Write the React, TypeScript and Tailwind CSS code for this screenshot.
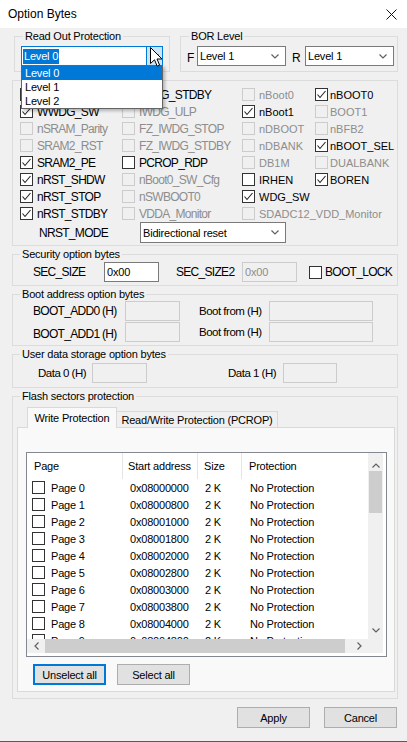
import React from "react";

type Opt = { label: string; checked?: boolean; disabled?: boolean } | null;

const BIG = "text-[12px] tracking-[-0.7px]";
const GRAY = "text-[#8d8d8d]";

const Check = ({ checked, disabled }: { checked?: boolean; disabled?: boolean }) => (
  <span
    className={`relative block w-[13px] h-[13px] shrink-0 border ${
      disabled ? "border-[#cccccc] bg-[#f0f0f0]" : "border-[#333333] bg-white"
    }`}
  >
    {checked && (
      <svg viewBox="0 0 11 11" className="absolute left-0 top-0 w-[11px] h-[11px]">
        <path d="M1.5 5.5L4 8.5L9.5 2" fill="none" stroke="#222" strokeWidth="1.1" />
      </svg>
    )}
  </span>
);

const Chevron = ({ dir = "down" }: { dir?: "down" | "up" | "left" | "right" }) => {
  const d = {
    down: "M0.5 0.5L4 4L7.5 0.5",
    up: "M0.5 4.5L4 1L7.5 4.5",
    left: "M4.5 0.5L1 4L4.5 7.5",
    right: "M0.5 0.5L4 4L0.5 7.5",
  }[dir];
  const horiz = dir === "down" || dir === "up";
  return (
    <svg
      width={horiz ? 8 : 5}
      height={horiz ? 5 : 8}
      viewBox={horiz ? "0 0 8 5" : "0 0 5 8"}
      className="block"
    >
      <path d={d} fill="none" stroke="#606060" strokeWidth="1.2" />
    </svg>
  );
};

const Combo = ({ w, h = "h-[20px]", text }: { w: string; h?: string; text: string }) => (
  <div
    className={`${w} ${h} flex items-center justify-between border border-[#7a7a7a] bg-white pl-[2px] pr-[6px]`}
  >
    <span>{text}</span>
    <Chevron />
  </div>
);

const Field = ({ w, text, disabled }: { w: string; text?: string; disabled?: boolean }) => (
  <div
    className={`${w} h-[20px] flex items-center pl-[2px] border ${
      disabled ? "border-[#cccccc] bg-[#f0f0f0] text-[#8d8d8d]" : "border-[#7a7a7a] bg-white"
    }`}
  >
    {text}
  </div>
);

const Group = ({
  title,
  className,
  legendClass = "ml-[7px]",
  children,
}: {
  title: string;
  className?: string;
  legendClass?: string;
  children: React.ReactNode;
}) => (
  <fieldset className={`border border-[#dcdcdc] ${className ?? ""}`}>
    <legend className={`${legendClass} px-[2px] h-[14px] leading-[14px]`}>{title}</legend>
    {children}
  </fieldset>
);

const col1: Opt[] = [
  { label: "IWDG_SW", checked: true },
  { label: "WWDG_SW", checked: true },
  { label: "nSRAM_Parity", disabled: true },
  { label: "SRAM2_RST", disabled: true },
  { label: "SRAM2_PE", checked: true },
  { label: "nRST_SHDW", checked: true },
  { label: "nRST_STOP", checked: true },
  { label: "nRST_STDBY", checked: true },
];
const col2: Opt[] = [
  { label: "IWDG_STDBY" },
  { label: "IWDG_ULP", disabled: true },
  { label: "FZ_IWDG_STOP", disabled: true },
  { label: "FZ_IWDG_STDBY", disabled: true },
  { label: "PCROP_RDP" },
  { label: "nBoot0_SW_Cfg", disabled: true },
  { label: "nSWBOOT0", disabled: true },
  { label: "VDDA_Monitor", disabled: true },
];
const col3: Opt[] = [
  { label: "nBoot0", disabled: true },
  { label: "nBoot1", checked: true },
  { label: "nDBOOT", disabled: true },
  { label: "nDBANK", disabled: true },
  { label: "DB1M", disabled: true },
  { label: "IRHEN" },
  { label: "WDG_SW", checked: true },
  { label: "SDADC12_VDD_Monitor", disabled: true },
];
const col4: Opt[] = [
  { label: "nBOOT0", checked: true },
  { label: "BOOT1", disabled: true },
  { label: "nBFB2", disabled: true },
  { label: "nBOOT_SEL", checked: true },
  { label: "DUALBANK", disabled: true },
  { label: "BOREN", checked: true },
  null,
  null,
];

const OptionCell = ({ opt, big, gap }: { opt: Opt; big?: boolean; gap: string }) => {
  if (!opt) return <div className="h-[17px]" />;
  return (
    <div className={`h-[17px] flex items-center ${gap}`}>
      <Check checked={opt.checked} disabled={opt.disabled} />
      <span
        className={`whitespace-nowrap ${big ? BIG : "text-[11px] tracking-[0px]"} ${
          opt.disabled ? GRAY : ""
        }`}
      >
        {opt.label}
      </span>
    </div>
  );
};

const pages = Array.from({ length: 10 }).map((_, i) => ({
  name: `Page ${i}`,
  address: "0x" + (0x08000000 + i * 0x800).toString(16).toUpperCase().padStart(8, "0"),
}));

const Button = ({ label, focused }: { label: string; focused?: boolean }) => (
  <div
    className={`w-[73px] h-[21px] flex items-center justify-center bg-[#e1e1e1] ${
      focused ? "border-2 border-[#0078d7]" : "border border-[#adadad]"
    }`}
  >
    {label}
  </div>
);

export default function App() {
  return (
    <div className="relative w-[407px] h-[742px] bg-[#f0f0f0] flex flex-col overflow-hidden font-['Liberation_Sans',Arial,sans-serif] text-[11px] leading-[14px] tracking-[-0.2px] text-black select-none">
      {/* title bar */}
      <div className="h-[28px] shrink-0 bg-white flex items-center justify-between pl-[8px] pr-[10px]">
        <span className="text-[12px] tracking-normal">Option Bytes</span>
        <svg width="11" height="11" viewBox="0 0 11 11" className="block">
          <path d="M0.5 0.5L10.5 10.5M10.5 0.5L0.5 10.5" stroke="#111" strokeWidth="1" />
        </svg>
      </div>

      {/* read out protection + BOR */}
      <div className="flex mt-[1px]">
        <Group title="Read Out Protection" legendClass="ml-[8px]" className="ml-[14px] w-[156px] pb-[5px]">
          <div className="ml-[6px] mt-[3px] w-[142px] h-[20px] flex border border-[#0078d7] bg-white">
            <div className="flex-1 flex items-center pl-[1px]">
              <span className="bg-[#0078d7] text-white px-[1px] leading-[15px]">Level 0</span>
            </div>
            <div className="w-[16px] bg-[#cce4f7] border-l border-[#0078d7] flex items-center justify-center">
              <Chevron />
            </div>
          </div>
        </Group>
        <Group title="BOR Level" legendClass="ml-[8px]" className="ml-[10px] w-[218px] pb-[5px]">
          <div className="mt-[3px] flex items-center pl-[6px]">
            <span className="w-[10px] pt-[4px] text-[12px]">F</span>
            <Combo w="w-[89px]" text="Level 1" />
            <span className="ml-[6px] w-[13px] pt-[4px] text-[12px]">R</span>
            <Combo w="w-[89px]" text="Level 1" />
          </div>
        </Group>
      </div>

      {/* user option bits */}
      <div className="ml-[12px] mt-[8px] w-[386px] border border-[#dcdcdc] pt-[5px] pb-[2px]">
        <div className="grid grid-cols-[102px_120px_73px_1fr] pl-[7px]">
          {col1.map((_, r) => (
            <React.Fragment key={r}>
              <OptionCell opt={col1[r]} big gap="gap-[4px]" />
              <OptionCell opt={col2[r]} big gap="gap-[4px]" />
              <OptionCell opt={col3[r]} gap="gap-[4px]" />
              <OptionCell opt={col4[r]} gap="gap-[2px]" />
            </React.Fragment>
          ))}
        </div>
        <div className="flex items-center h-[21px] pl-[26px]">
          <span className={`w-[101px] ${BIG}`}>NRST_MODE</span>
          <Combo w="w-[146px]" h="h-[21px]" text="Bidirectional reset" />
        </div>
      </div>

      {/* security */}
      <Group title="Security option bytes" className="ml-[12px] mt-[1px] w-[386px] pb-[3px]">
        <div className="mt-[1px] flex items-center pl-[20px]">
          <span className={`w-[71px] ${BIG}`}>SEC_SIZE</span>
          <Field w="w-[55px]" text="0x00" />
          <span className={`ml-[17px] w-[66px] ${BIG}`}>SEC_SIZE2</span>
          <Field w="w-[55px]" text="0x00" disabled />
          <div className="ml-[12px] flex items-center gap-[3px]">
            <Check />
            <span className={BIG}>BOOT_LOCK</span>
          </div>
        </div>
      </Group>

      {/* boot address */}
      <Group title="Boot address option bytes" className="ml-[12px] mt-[1px] w-[386px] pb-[3px]">
        <div className="flex flex-col gap-[1px] pl-[20px]">
          {["BOOT_ADD0 (H)", "BOOT_ADD1 (H)"].map((label, i) => (
            <div key={label} className="flex items-center">
              <span className={`w-[92px] ${BIG} ${i === 1 ? "pt-[4px]" : ""}`}>{label}</span>
              <Field w="w-[55px]" disabled />
              <span className="ml-[19px] w-[70px] text-[11.5px] tracking-[-0.5px]">Boot from (H)</span>
              <Field w="w-[104px]" disabled />
            </div>
          ))}
        </div>
      </Group>

      {/* user data */}
      <Group title="User data storage option bytes" className="ml-[12px] mt-[1px] w-[386px] pb-[4px]">
        <div className="mt-[2px] flex items-center pl-[25px]">
          <span className="w-[54px] text-[11.5px] tracking-[-0.5px]">Data 0 (H)</span>
          <Field w="w-[55px]" disabled />
          <span className="ml-[81px] w-[55px] text-[11.5px] tracking-[-0.5px]">Data 1 (H)</span>
          <Field w="w-[54px]" disabled />
        </div>
      </Group>

      {/* flash sectors protection */}
      <Group title="Flash sectors protection" className="ml-[12px] mt-[1px] w-[386px] pb-[6px]">
        <div className="mt-[4px] ml-[14px] h-[20px] flex items-end relative z-10">
          <div className="w-[90px] h-[21px] -mb-[1px] border border-b-0 border-[#d9d9d9] bg-[#f9f9f9] flex items-center justify-center">
            Write Protection
          </div>
          <div className="w-[161px] h-[16px] border border-l-0 border-b-0 border-[#d9d9d9] bg-[#f0f0f0] flex items-center justify-center">
            Read/Write Protection (PCROP)
          </div>
        </div>
        <div className="ml-[4px] w-[378px] border border-[#d9d9d9] bg-[#f9f9f9] pb-[6px]">
          <div className="ml-[8px] mt-[24px] w-[361px] h-[205px] border border-[#828790] bg-white flex flex-col">
            <div className="flex h-[186px]">
              <div className="w-[341px] overflow-hidden">
                <div className="grid grid-cols-[96px_75px_44px_126px] h-[26px]">
                  <div className="border-r border-[#e5e5e5] flex items-center pl-[7px]">Page</div>
                  <div className="border-r border-[#e5e5e5] flex items-center pl-[5px]">Start address</div>
                  <div className="border-r border-[#e5e5e5] flex items-center pl-[6px]">Size</div>
                  <div className="flex items-center pl-[7px]">Protection</div>
                </div>
                {pages.map((p) => (
                  <div key={p.name} className="grid grid-cols-[96px_75px_44px_126px] h-[17px]">
                    <div className="flex items-center pl-[5px] gap-[6px]">
                      <Check />
                      <span>{p.name}</span>
                    </div>
                    <div className="flex items-center pl-[7px]">{p.address}</div>
                    <div className="flex items-center pl-[7px]">2 K</div>
                    <div className="flex items-center pl-[8px]">No Protection</div>
                  </div>
                ))}
              </div>
              <div className="w-[15px] flex flex-col bg-[#f0f0f0]">
                <div className="h-[18px] flex items-end justify-center pb-[3px]">
                  <Chevron dir="up" />
                </div>
                <div className="mx-[1px] h-[42px] bg-[#cdcdcd]" />
                <div className="flex-1" />
                <div className="h-[17px] flex items-center justify-center">
                  <Chevron dir="down" />
                </div>
              </div>
            </div>
            <div className="flex h-[14px]">
              <div className="w-[341px] flex bg-[#f0f0f0]">
                <div className="w-[18px] flex items-center justify-center">
                  <Chevron dir="left" />
                </div>
                <div className="w-[300px] bg-[#cdcdcd]" />
                <div className="w-[6px]" />
                <div className="w-[17px] flex items-center justify-center">
                  <Chevron dir="right" />
                </div>
              </div>
              <div className="w-[15px] bg-[#f0f0f0]" />
            </div>
          </div>
          <div className="mt-[7px] ml-[15px] flex gap-[11px]">
            <Button label="Unselect all" focused />
            <Button label="Select all" />
          </div>
        </div>
      </Group>

      {/* dialog buttons */}
      <div className="mt-[8px] flex justify-end gap-[14px] pr-[10px]">
        <Button label="Apply" />
        <Button label="Cancel" />
      </div>

      <div className="mt-auto h-[1px] bg-[#5a5a5a]" />

      {/* open read-out-protection dropdown */}
      <div className="absolute left-[21px] top-[65px] w-[142px] border border-[#646464] bg-white shadow-[2px_2px_3px_rgba(0,0,0,0.25)] z-20">
        <div className="h-[14px] leading-[14px] pl-[3px] bg-[#0078d7] text-white">Level 0</div>
        <div className="h-[14px] leading-[14px] pl-[3px]">Level 1</div>
        <div className="h-[14px] leading-[14px] pl-[3px]">Level 2</div>
      </div>

      {/* mouse pointer */}
      <svg width="13" height="21" viewBox="0 0 13 21" className="absolute left-[150px] top-[47px] z-30">
        <path
          d="M0.5 0.5L0.5 16.5L4.5 12.8L7.2 19.2L9.6 18.2L7 12L12 12Z"
          fill="#fff"
          stroke="#000"
          strokeWidth="1"
          strokeLinejoin="miter"
        />
      </svg>
    </div>
  );
}
